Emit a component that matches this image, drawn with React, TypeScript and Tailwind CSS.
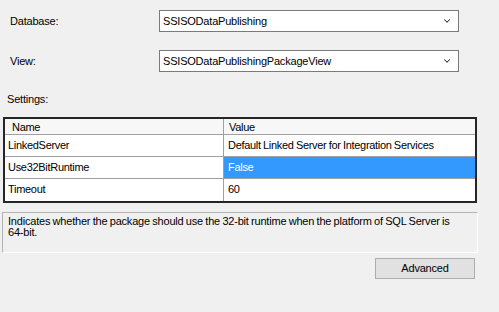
import { ChevronDown } from 'lucide-react'

type Row = { name: string; value: string; selected?: boolean }

const rows: Row[] = [
  { name: 'LinkedServer', value: 'Default Linked Server for Integration Services' },
  { name: 'Use32BitRuntime', value: 'False', selected: true },
  { name: 'Timeout', value: '60' },
]

const Combo = ({ value }: { value: string }) => (
  <div className="flex items-center justify-between w-[300px] h-[22px] bg-white border border-[#7a7a7a] pl-[3px] pr-[6px]">
    <span>{value}</span>
    <ChevronDown className="w-[10px] h-[10px] text-[#333]" strokeWidth={2.5} />
  </div>
)

export default function App() {
  return (
    <div
      className="w-[499px] h-[312px] bg-[#f0f0f0] text-[11px] text-black overflow-hidden tracking-[-0.2px]"
      style={{ fontFamily: '"Liberation Sans", Arial, sans-serif' }}
    >
      <div className="flex items-center pt-[10px]">
        <span className="w-[159px] pl-[10px]">Database:</span>
        <Combo value="SSISODataPublishing" />
      </div>
      <div className="flex items-center mt-[18px]">
        <span className="w-[159px] pl-[10px]">View:</span>
        <Combo value="SSISODataPublishingPackageView" />
      </div>
      <p className="pl-[7px] mt-[20px] leading-[14px]">Settings:</p>

      <div className="ml-[3px] mt-[11px] w-[474px] border-2 border-[#262626] bg-white tracking-[-0.3px] [word-spacing:-0.5px]">
        <div className="flex h-[16px] bg-[#f7f7f7] border-b border-[#a0a0a0]">
          <div className="w-[219px] pl-[7px] border-r border-[#a0a0a0] leading-[16px]">Name</div>
          <div className="flex-1 pl-[5px] leading-[16px]">Value</div>
        </div>
        {rows.map((r, i) => (
          <div
            key={r.name}
            className={`flex h-[22px] ${i < rows.length - 1 ? 'border-b border-[#a0a0a0]' : ''}`}
          >
            <div className="w-[219px] pl-[3px] border-r border-[#a0a0a0] leading-[20px]">{r.name}</div>
            <div
              className={`flex-1 pl-[4px] leading-[20px] ${r.selected ? 'bg-[#3399ff] text-white' : ''}`}
            >
              {r.value}
            </div>
          </div>
        ))}
      </div>

      <div className="ml-[2px] mt-[9px] w-[476px] h-[41px] border border-t-[#b4b4b4] border-l-[#b4b4b4] border-r-white border-b-white px-[5px] pt-[3px] leading-[11px] [word-spacing:-0.5px]">
        Indicates whether the package should use the 32-bit runtime when the platform of SQL Server is{' '}
        <span className="whitespace-nowrap">64-bit.</span>
      </div>

      <div className="flex justify-end pr-[24px] mt-[5px]">
        <button className="w-[100px] h-[21px] bg-[#e1e1e1] border border-[#adadad] text-[11px]">Advanced</button>
      </div>
    </div>
  )
}
